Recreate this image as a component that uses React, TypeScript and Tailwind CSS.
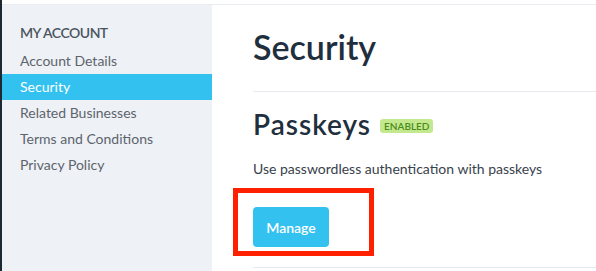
const items = ["Account Details", "Security", "Related Businesses", "Terms and Conditions", "Privacy Policy"]

export default function App() {
    return (
        <div className="flex h-[271px] w-[596px] overflow-hidden bg-white font-['Lato',sans-serif]">
            <div className="w-[2px] bg-[#1e2833]" />
            <div className="flex flex-1 flex-col">
                <div className="h-[4px] bg-white" />
                <div className="flex flex-1 border-t border-[#e9ecf0]">
                    {/* sidebar */}
                    <div className="w-[210px] bg-[#eef1f6] pt-[20px]">
                        <div className="px-[18px] text-[14px] font-semibold uppercase leading-[16px] tracking-[-0.5px] text-[#4b545e]">
                            My Account
                        </div>
                        <ul className="mt-[7px]">
                            {items.map(item => (
                                <li
                                    key={item}
                                    className={
                                        item === "Security"
                                            ? "h-[26px] bg-[#33c1f0] px-[18px] text-[14px] leading-[26px] text-white"
                                            : "h-[26px] px-[18px] text-[14px] leading-[26px] text-[#5d646c]"
                                    }
                                >
                                    {item}
                                </li>
                            ))}
                        </ul>
                    </div>

                    {/* main */}
                    <div className="flex-1 pl-[41px]">
                        <h1 className="pt-[18px] text-[34px] font-semibold leading-[48px] text-[#1f2f3d]">Security</h1>
                        <div className="mt-[20px] border-t border-[#e6e9ed]" />
                        <div className="mt-[15px] flex items-center gap-[9px]">
                            <h2 className="text-[28px] font-semibold leading-[34px] tracking-[1px] text-[#1f2f3d]">Passkeys</h2>
                            <span className="mt-[4px] rounded-[3px] bg-[#c3e88e] px-[4px] text-[10px] font-semibold leading-[14px] text-[#4b8d1c]">
                                ENABLED
                            </span>
                        </div>
                        <p className="mt-[19px] text-[14px] leading-[18px] text-[#38424c]">
                            Use passwordless authentication with passkeys
                        </p>
                        <div className="relative mt-[29px] h-[40px]">
                            <button className="h-[40px] w-[76px] rounded-[4px] bg-[#33c1f0] text-[14px] font-semibold text-white">
                                Manage
                            </button>
                            <div className="absolute left-[-20px] top-[-19px] h-[68px] w-[141px] border-[5px] border-[#ff2000]" />
                        </div>
                        <div className="mt-[20px] border-t border-[#e6e9ed]" />
                    </div>
                </div>
            </div>
        </div>
    )
}
